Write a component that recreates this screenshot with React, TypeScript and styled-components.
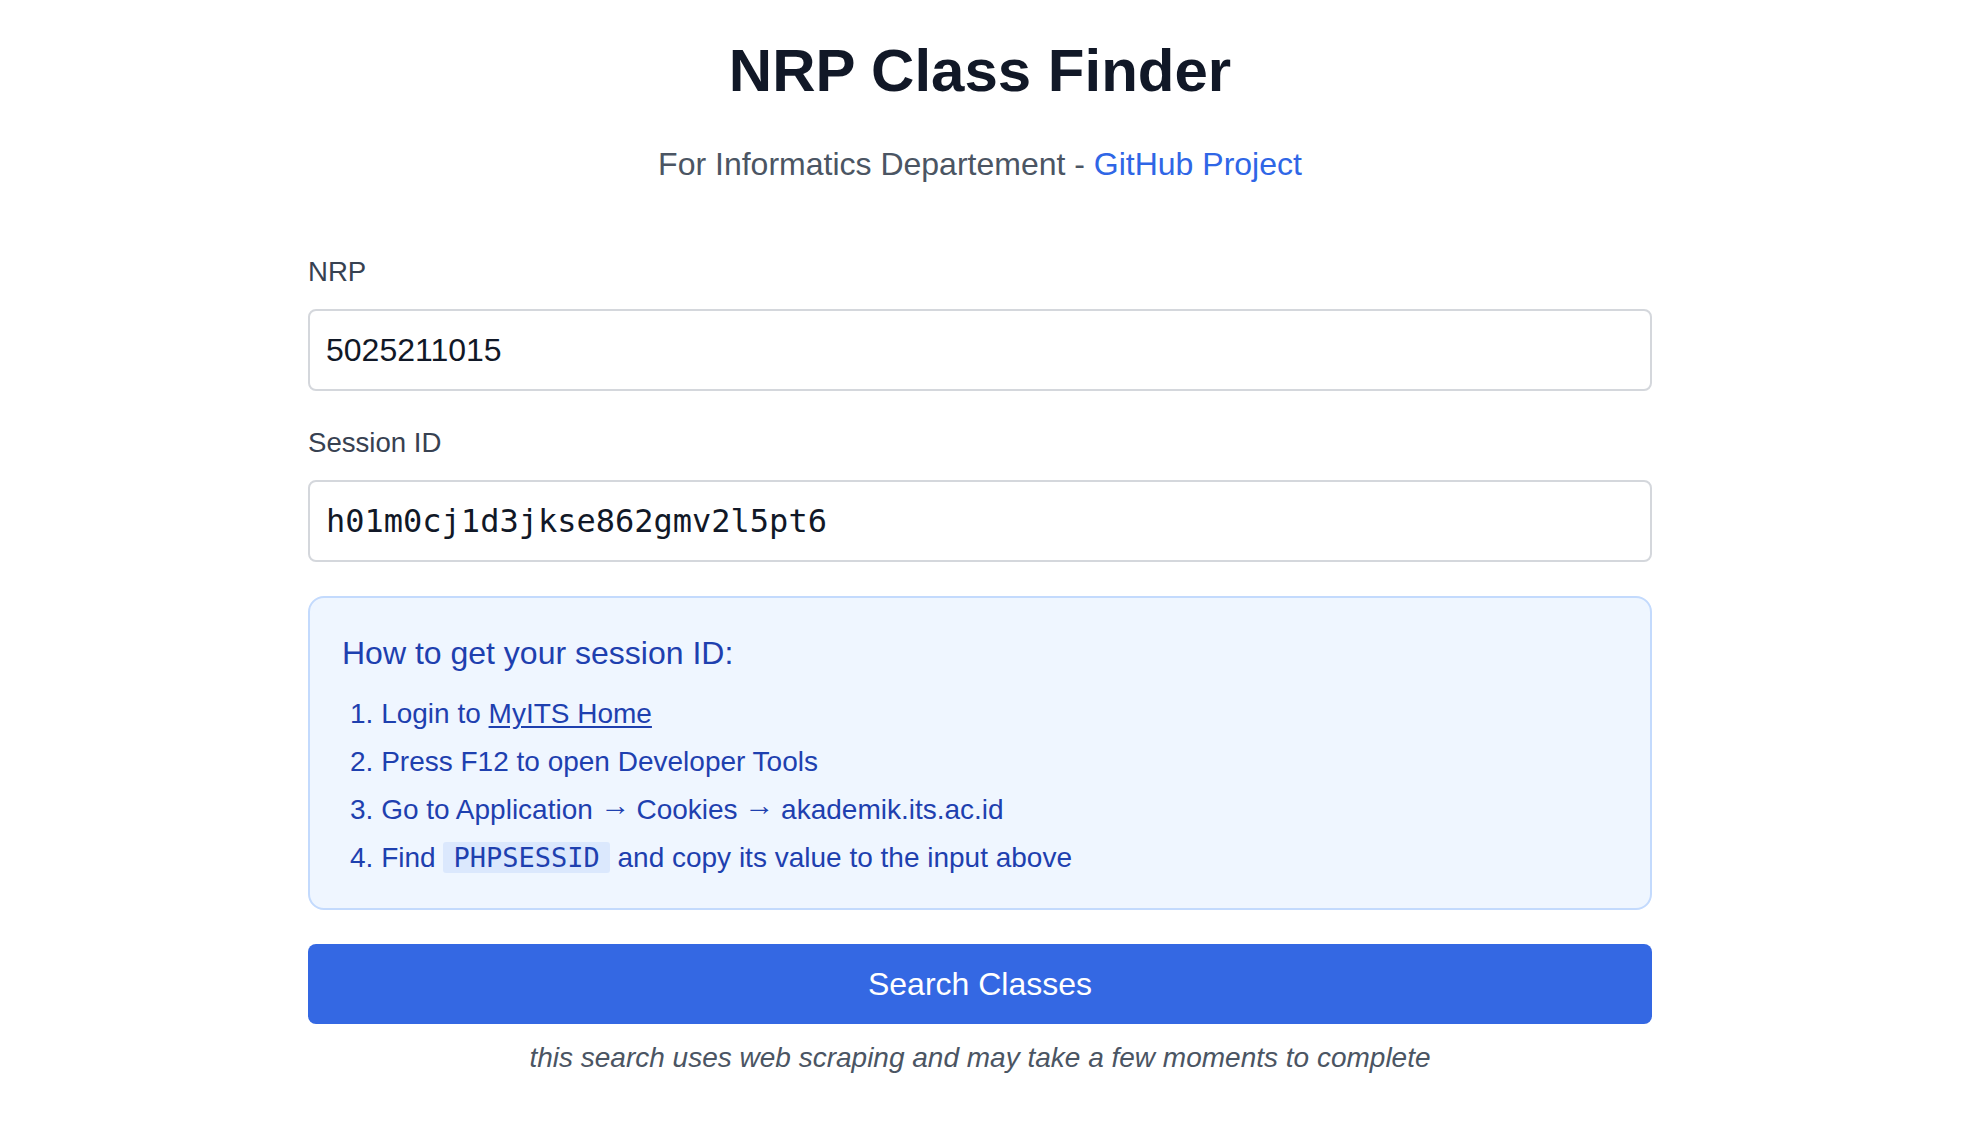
import React from "react";
import styled, { createGlobalStyle } from "styled-components";

const GlobalStyle = createGlobalStyle`
  html, body {
    margin: 0;
    padding: 0;
    background: #ffffff;
  }
  body {
    font-family: "Liberation Sans", Arial, Helvetica, sans-serif;
    color: #111827;
  }
  * {
    box-sizing: border-box;
  }
`;

const Page = styled.main`
  display: flex;
  flex-direction: column;
  align-items: center;
  padding: 35px 20px 40px 0;
`;

const Container = styled.div`
  width: 1344px;
  display: flex;
  flex-direction: column;
`;

const Header = styled.header`
  text-align: center;
`;

const Title = styled.h1`
  margin: 0;
  font-size: 60px;
  line-height: 72px;
  font-weight: 700;
  color: #111827;
`;

const Subtitle = styled.p`
  margin: 37px 0 0;
  font-size: 32px;
  line-height: 40px;
  color: #4b5563;
`;

const HeaderLink = styled.a`
  color: #2f66e6;
  text-decoration: none;
`;

const Form = styled.form`
  margin-top: 70px;
  display: flex;
  flex-direction: column;
  gap: 34px;
`;

const Field = styled.div`
  display: flex;
  flex-direction: column;
`;

const Label = styled.label`
  font-size: 27.6px;
  line-height: 36px;
  color: #374151;
  margin-bottom: 19px;
`;

const Input = styled.input<{ $mono?: boolean }>`
  width: 100%;
  height: 82px;
  padding: 0 16px;
  border: 2px solid #d4d7dc;
  border-radius: 8px;
  background: #ffffff;
  color: #111827;
  font-size: 32px;
  font-family: ${(p) =>
    p.$mono
      ? `"DejaVu Sans Mono", "Liberation Mono", monospace`
      : `"Liberation Sans", Arial, sans-serif`};
  outline: none;
`;

const InfoBox = styled.section`
  border: 2px solid #c3dafd;
  border-radius: 16px;
  background: #eff6ff;
  padding: 33px 32px 26px;
  color: #1e40af;
`;

const InfoTitle = styled.h2`
  margin: 0;
  font-size: 32px;
  line-height: 44px;
  font-weight: 400;
  color: #1e40af;
`;

const Steps = styled.ol`
  margin: 15px 0 0;
  padding: 0 0 0 8px;
  list-style: decimal inside;
`;

const Step = styled.li`
  font-size: 28px;
  line-height: 48px;
  color: #1e40af;
`;

const Arrow = styled.span`
  display: inline-block;
  font-size: 28px;
  line-height: 1;
  transform: translateY(-4px) scaleX(1.08);
`;

const StepLink = styled.a`
  color: #1e40af;
  text-decoration: underline;
  text-underline-offset: 3px;
`;

const Code = styled.code`
  font-family: "DejaVu Sans Mono", "Liberation Mono", monospace;
  font-size: 27px;
  background: #dbe8fd;
  padding: 0 10px;
  border-radius: 3px;
  color: #1e40af;
`;

const SubmitButton = styled.button`
  height: 80px;
  width: 100%;
  border: none;
  border-radius: 8px;
  background: #3468e3;
  color: #ffffff;
  font-family: "Liberation Sans", Arial, sans-serif;
  font-size: 32px;
  cursor: pointer;
`;

const Note = styled.p`
  margin: 16px 0 0;
  text-align: center;
  font-size: 28px;
  line-height: 36px;
  font-style: italic;
  color: #4b5563;
`;

export default function App() {
  return (
    <>
      <GlobalStyle />
      <Page>
        <Container>
          <Header>
            <Title>NRP Class Finder</Title>
            <Subtitle>
              For Informatics Departement -{" "}
              <HeaderLink href="#">GitHub Project</HeaderLink>
            </Subtitle>
          </Header>
          <Form onSubmit={(e) => e.preventDefault()}>
            <Field>
              <Label htmlFor="nrp">NRP</Label>
              <Input id="nrp" defaultValue="5025211015" />
            </Field>
            <Field>
              <Label htmlFor="session">Session ID</Label>
              <Input id="session" $mono defaultValue="h01m0cj1d3jkse862gmv2l5pt6" />
            </Field>
            <InfoBox>
              <InfoTitle>How to get your session ID:</InfoTitle>
              <Steps>
                <Step>
                  Login to <StepLink href="#">MyITS Home</StepLink>
                </Step>
                <Step>Press F12 to open Developer Tools</Step>
                <Step>
                  Go to Application <Arrow>→</Arrow> Cookies <Arrow>→</Arrow> akademik.its.ac.id
                </Step>
                <Step>
                  Find <Code>PHPSESSID</Code> and copy its value to the input above
                </Step>
              </Steps>
            </InfoBox>
            <SubmitButton type="submit">Search Classes</SubmitButton>
          </Form>
          <Note>this search uses web scraping and may take a few moments to complete</Note>
        </Container>
      </Page>
    </>
  );
}
